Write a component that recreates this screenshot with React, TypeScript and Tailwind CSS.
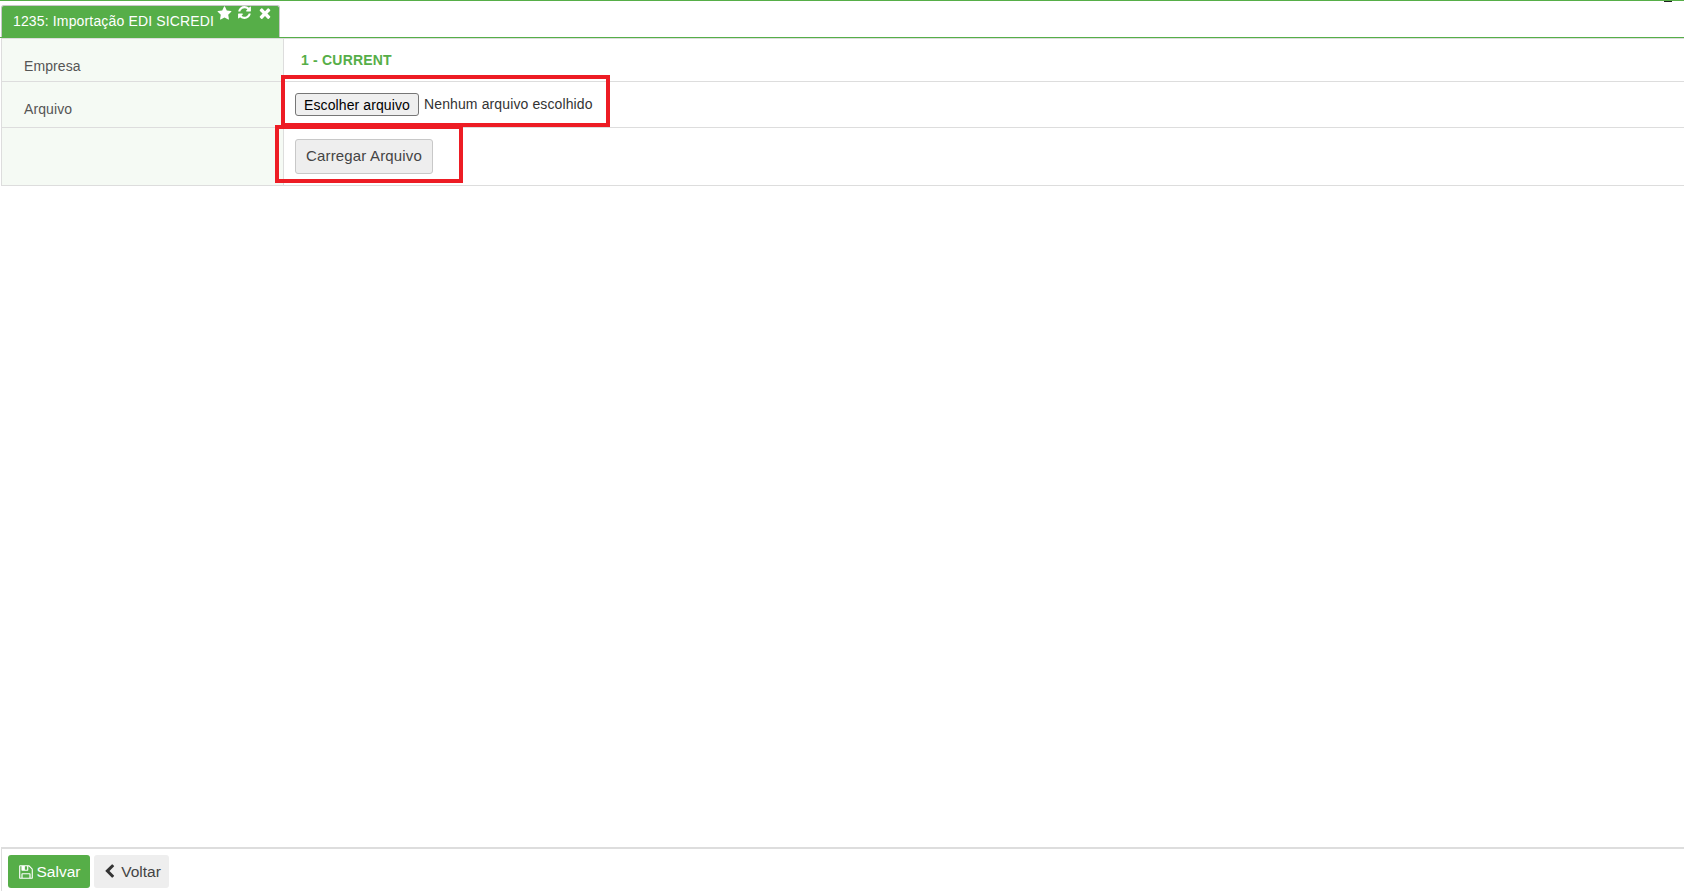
const font = "font-['Liberation_Sans',Arial,sans-serif]";

// Font Awesome 4 glyphs, the ones in the FA5 packs are too thin for this screen
const ICONS = {
  star: "M1728 647q0 22-26 48l-363 354 86 500q1 7 1 20 0 21-10.5 35.5t-30.5 14.5q-19 0-40-12l-449-236-449 236q-22 12-40 12-21 0-31.5-14.5t-10.5-35.5q0-6 2-20l86-500-364-354q-25-27-25-48 0-37 56-46l502-73 225-455q19-41 49-41t49 41l225 455 502 73q56 9 56 46z",
  refresh: "M1639 1056q0 5-1 7-64 268-268 434.5t-478 166.5q-146 0-282.5-55t-243.5-157l-129 129q-19 19-45 19t-45-19-19-45v-448q0-26 19-45t45-19h448q26 0 45 19t19 45-19 45l-137 137q71 66 161 102t187 36q134 0 250-65t186-179q11-17 53-117 8-23 30-23h192q13 0 22.5 9.5t9.5 22.5zm25-800v448q0 26-19 45t-45 19h-448q-26 0-45-19t-19-45 19-45l138-138q-148-137-349-137-134 0-250 65t-186 179q-11 17-53 117-8 23-30 23h-199q-13 0-22.5-9.5t-9.5-22.5v-7q65-268 270-434.5t480-166.5q146 0 284 55.5t245 156.5l130-129q19-19 45-19t45 19 19 45z",
  times: "M1490 1322q0 40-28 68l-136 136q-28 28-68 28t-68-28l-294-294-294 294q-28 28-68 28t-68-28l-136-136q-28-28-28-68t28-68l294-294-294-294q-28-28-28-68t28-68l136-136q28-28 68-28t68 28l294 294 294-294q28-28 68-28t68 28l136 136q28 28 28 68t-28 68l-294 294 294 294q28 28 28 68z",
  save: "M512 1536h768v-384h-768v384zm896 0h128v-896q0-14-10-38.5t-20-34.5l-281-281q-10-10-34-20t-39-10v416q0 40-28 68t-68 28h-576q-40 0-68-28t-28-68v-416h-128v1280h128v-416q0-40 28-68t68-28h832q40 0 68 28t28 68v416zm-384-928v-320q0-13-9.5-22.5t-22.5-9.5h-192q-13 0-22.5 9.5t-9.5 22.5v320q0 13 9.5 22.5t22.5 9.5h192q13 0 22.5-9.5t9.5-22.5zm640 32v928q0 40-28 68t-68 28h-1344q-40 0-68-28t-28-68v-1344q0-40 28-68t68-28h928q40 0 88 20t76 48l280 280q28 28 48 76t20 88z",
  chevronLeft: "M1427 301l-531 531 531 531q19 19 19 45t-19 45l-166 166q-19 19-45 19t-45-19l-742-742q-19-19-19-45t19-45l742-742q19-19 45-19t45 19l166 166q19 19 19 45t-19 45z",
};

function Icon({ name, className }: { name: keyof typeof ICONS; className: string }) {
  return (
    <svg viewBox="0 0 1792 1792" fill="currentColor" className={className}>
      <path d={ICONS[name]} />
    </svg>
  );
}

function FormRow({ label, labelClass, rowClass, children }: { label: string; labelClass: string; rowClass: string; children: React.ReactNode }) {
  return (
    <div className={`flex border-b border-[#dddddd] ${rowClass}`}>
      <div className={`w-[282px] shrink-0 bg-[#f5faf4] border-r border-[#dddddd] pl-[22px] text-[14px] text-[#555555] tracking-[0.1px] ${labelClass}`}>
        {label}
      </div>
      <div className="flex-1 min-w-0 pl-[11px]">{children}</div>
    </div>
  );
}

export default function App() {
  return (
    <div className={`${font} relative flex flex-col h-[891px] bg-white overflow-hidden border-t border-[#56ae48]`}>
      {/* Tab bar */}
      <div className="h-[37px] shrink-0 pt-[4px] pl-[1px] border-b border-[#56ae48]">
        <div className="relative w-[279px] h-[32px] bg-[#56ae48] border border-[#c9c9c9] border-b-0 rounded-t-[3px] text-white text-[14px] tracking-[0.15px] pl-[11px] pt-[7px] leading-[16px]">
          1235: Importação EDI SICREDI
          <Icon name="star" className="absolute left-[215px] top-[0px] w-[15px] h-[15px]" />
          <Icon name="refresh" className="absolute left-[235px] top-[-1px] w-[15px] h-[15px]" />
          <Icon name="times" className="absolute left-[255px] top-[-1px] w-[16px] h-[16px]" />
        </div>
      </div>

      {/* Form */}
      <div className="ml-[1px] border-l border-[#dddddd] border-t border-t-[#dddddd]">
        <FormRow label="Empresa" labelClass="pt-[17px] leading-[20px]" rowClass="h-[43px]">
          <div className="pl-[6px] pt-[11px] text-[14px] font-bold text-[#56ae48] leading-[20px] tracking-[0.2px]">1 - CURRENT</div>
        </FormRow>
        <FormRow label="Arquivo" labelClass="pt-[17px] leading-[20px]" rowClass="h-[46px]">
          <div className="flex items-center pt-[11px] gap-[5px]">
            <button className="h-[23px] w-[124px] bg-[#efefef] border border-[#767676] rounded-[3px] text-[14px] text-black leading-none tracking-[0.1px]">
              Escolher arquivo
            </button>
            <span className="text-[14px] text-[#333333] tracking-[0.12px]">Nenhum arquivo escolhido</span>
          </div>
        </FormRow>
        <FormRow label="" labelClass="" rowClass="h-[58px]">
          <div className="pt-[11px]">
            <button className="h-[35px] w-[138px] bg-[#eeeeee] border border-[#c8c8c8] rounded-[3px] text-[15px] text-[#444444] tracking-[0.15px]">
              Carregar Arquivo
            </button>
          </div>
        </FormRow>
      </div>

      <div className="flex-1" />

      {/* Footer */}
      <div className="h-[44px] shrink-0 ml-[1px] border-l border-[#dddddd] border-t-2 border-t-[#dddddd] flex items-start gap-[4px] pl-[6px] pt-[6px]">
        <button className="flex items-center gap-[3px] h-[33px] w-[82px] justify-center bg-[#56ae48] rounded-[3px] text-white text-[15.5px] leading-[30px]">
          <Icon name="save" className="w-[16px] h-[16px]" />
          Salvar
        </button>
        <button className="flex items-center gap-[4px] h-[33px] w-[75px] justify-center bg-[#eeeeee] rounded-[3px] text-[#444444] text-[15.5px] leading-[30px]">
          <Icon name="chevronLeft" className="w-[15px] h-[15px] text-[#333333]" />
          Voltar
        </button>
      </div>

      {/* Clipped glyph at the very top edge */}
      <div className="absolute left-[1664px] top-0 w-[8px] h-[1px] bg-[#222222]" />

      {/* Red annotation boxes drawn over the screenshot */}
      <div className="absolute left-[281px] top-[74px] w-[329px] h-[52px] border-[4px] border-[#ed1c24]" />
      <div className="absolute left-[275px] top-[124px] w-[188px] h-[58px] border-[4px] border-[#ed1c24]" />
    </div>
  );
}
